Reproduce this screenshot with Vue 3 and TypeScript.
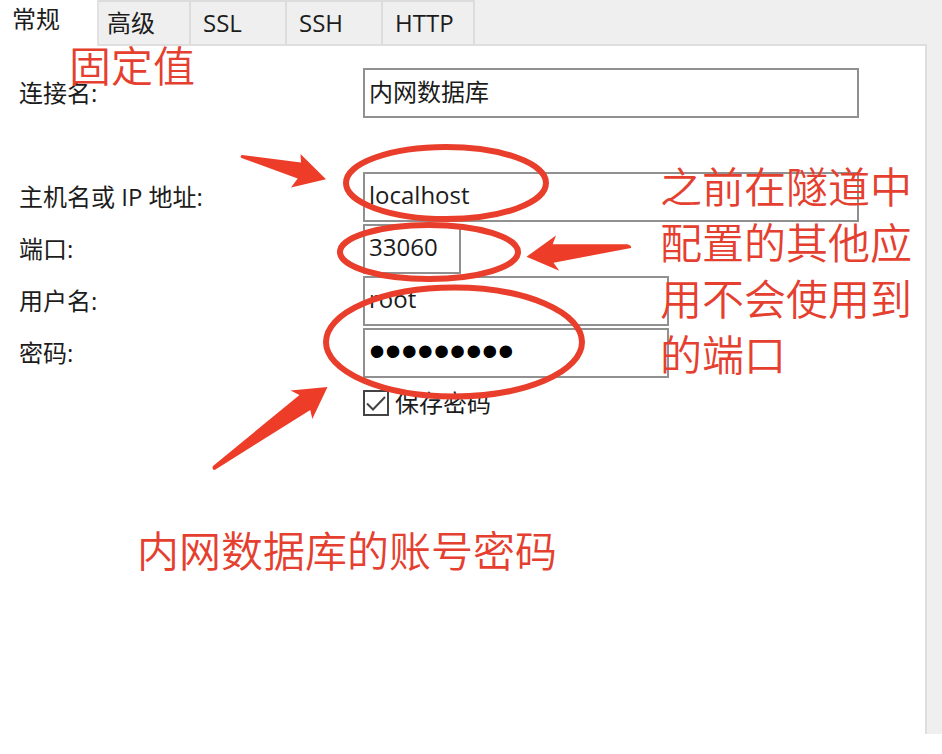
<script setup lang="ts">
import { ref } from 'vue'

const tabs = ['常规', '高级', 'SSL', 'SSH', 'HTTP']
const activeTab = ref('常规')

const connectionName = ref('内网数据库')
const host = ref('localhost')
const port = ref('33060')
const user = ref('root')
const password = ref('123456789')
const savePassword = ref(true)
</script>

<template>
  <main class="window">
    <div class="tabs" role="tablist">
      <button
        v-for="tab in tabs"
        :key="tab"
        type="button"
        role="tab"
        class="tab"
        :class="{ active: tab === activeTab }"
        :aria-selected="tab === activeTab"
        @click="activeTab = tab"
      >
        {{ tab }}
      </button>
    </div>

    <form class="panel" @submit.prevent>
      <div class="row row-name">
        <label for="name">连接名:</label>
        <input id="name" v-model="connectionName" class="field" type="text" />
      </div>
      <div class="row">
        <label for="host">主机名或 IP 地址:</label>
        <input id="host" v-model="host" class="field" type="text" />
      </div>
      <div class="row">
        <label for="port">端口:</label>
        <input id="port" v-model="port" class="field short" type="text" />
      </div>
      <div class="row">
        <label for="user">用户名:</label>
        <input id="user" v-model="user" class="field medium" type="text" />
      </div>
      <div class="row">
        <label for="password">密码:</label>
        <input id="password" v-model="password" class="field medium secret" type="password" autocomplete="off" />
      </div>
      <div class="row">
        <label class="save" for="save">
          <span class="box">
            <input id="save" v-model="savePassword" type="checkbox" />
            <svg v-if="savePassword" viewBox="0 0 26 26" aria-hidden="true">
              <path d="M4 13.5 L10 19.5 L22 7" fill="none" stroke="#444" stroke-width="2" />
            </svg>
          </span>
          保存密码
        </label>
      </div>
    </form>

    <svg class="marks" width="942" height="500" viewBox="0 0 942 500" aria-hidden="true">
      <g fill="none" stroke="#e83e2b" stroke-width="6">
        <ellipse cx="446" cy="183" rx="100" ry="36" />
        <ellipse cx="429" cy="252" rx="89" ry="27" />
        <ellipse cx="454" cy="342" rx="128" ry="54.5" />
      </g>
      <g fill="#ed3d29">
        <path d="M242 155 L301 162.5 L300.5 154 L326 179.3 L291 187.5 L297.7 178.5 L241.5 158 Q239.5 156 242 155 Z" />
        <path d="M526.5 256.7 L556 235.5 L552.7 244.3 L627 244.3 Q632 245.5 631 248 L553.5 262.7 L559.3 270.8 Z" />
        <path d="M327.5 387 L290.5 390.5 L299.5 395 L213 466 Q211.5 469.5 214.7 470 L310.3 410 L312.3 419 Z" />
      </g>
    </svg>
    <p class="note note-fixed">固定值</p>
    <p class="note note-port">之前在隧道中配置的其他应用不会使用到的端口</p>
    <p class="note note-account">内网数据库的账号密码</p>
  </main>
</template>

<style>
body {
  margin: 0;
  background: #fff;
}
</style>

<style scoped>
.window {
  position: relative;
  box-sizing: border-box;
  display: flex;
  flex-direction: column;
  min-height: calc(100vh - 20px);
  padding-right: 15px;
  overflow: hidden;
  background: #efefef;
  color: #1c1c1c;
  font-family: "Open Sans", "Noto Sans CJK SC", sans-serif;
  font-size: 24px;
  line-height: 32px;
}

.tabs {
  display: flex;
  height: 44px;
}

.tab {
  box-sizing: border-box;
  height: 44px;
  width: 96px;
  padding: 4px 12px;
  border: 0 solid #dcdcdc;
  border-width: 2px 2px 0 0;
  background: #efefef;
  color: inherit;
  font: inherit;
  text-align: left;
}

.tab:nth-child(2) {
  width: 92px;
  padding-left: 8px;
}

.tab:last-child {
  width: 92px;
}

.tab.active {
  position: relative;
  z-index: 1;
  height: 46px;
  width: 99px;
  padding: 0 12px 8px;
  border-top-width: 0;
  border-color: #e2e2e2;
  background: #fff;
}

.panel {
  box-sizing: border-box;
  flex: 1;
  display: flex;
  flex-direction: column;
  gap: 2px;
  padding: 22px 66px 22px 19px;
  border: 2px solid #dedede;
  border-width: 2px 2px 0 0;
  background: #fff;
}

.row {
  display: grid;
  grid-template-columns: 344px 1fr;
  align-items: center;
}

.row-name {
  margin-bottom: 52px;
}

.field {
  box-sizing: border-box;
  width: 100%;
  height: 50px;
  padding: 0 4px 6px;
  border: 2px solid #909090;
  border-radius: 0;
  outline: 0;
  background: #fff;
  color: inherit;
  font: inherit;
}

.medium {
  width: 306px;
}

.short {
  width: 98px;
}

.secret {
  padding-bottom: 4px;
  color: #000;
  font-family: "Liberation Sans", sans-serif;
  font-size: 46px;
}

.save {
  grid-column: 2;
  display: flex;
  align-items: center;
  gap: 6px;
  height: 46px;
}

.box {
  display: grid;
  width: 26px;
  height: 26px;
}

.box input,
.box svg {
  grid-area: 1 / 1;
  width: 26px;
  height: 26px;
}

.box input {
  box-sizing: border-box;
  margin: 0;
  appearance: none;
  border: 2px solid #444;
  background: #fff;
}

.box svg {
  pointer-events: none;
}

.marks {
  position: absolute;
  top: 0;
  left: 0;
  z-index: 2;
  pointer-events: none;
}

.note {
  position: absolute;
  z-index: 3;
  margin: 0;
  color: #e5402f;
  font-family: "Noto Sans CJK SC", sans-serif;
  font-size: 42px;
  font-weight: 350;
  line-height: 56px;
  pointer-events: none;
}

.note-fixed {
  top: 36px;
  left: 69px;
}

.note-port {
  top: 157px;
  left: 660px;
  width: 254px;
}

.note-account {
  top: 521px;
  left: 137px;
}
</style>
